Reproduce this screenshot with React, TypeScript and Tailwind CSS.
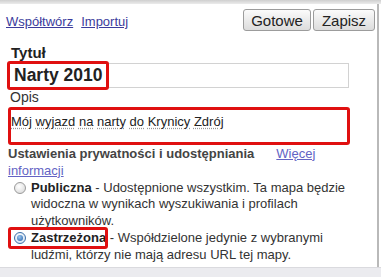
import React from "react";

const font = { fontFamily: '"Liberation Sans", Arial, sans-serif' };

function Radio({ checked }: { checked?: boolean }) {
  return (
    <span
      className={`mt-[2px] h-[12px] w-[12px] shrink-0 rounded-full border flex items-center justify-center ${
        checked
          ? "border-[#3d6fa8] bg-[radial-gradient(circle_at_40%_35%,#ffffff,#c9dcef)]"
          : "border-[#9a9a9a] bg-[radial-gradient(circle_at_40%_35%,#ffffff,#d4d4d4)]"
      }`}
    >
      {checked && <span className="h-[6px] w-[6px] rounded-full bg-[radial-gradient(circle_at_40%_35%,#9cc8f0,#1c5aa6)]" />}
    </span>
  );
}

export default function App() {
  return (
    <div className="w-[381px] h-[277px] bg-white text-[#333] overflow-hidden flex flex-col" style={font}>
      <div className="h-[4px] bg-gradient-to-b from-[#cfcfcf] to-[#ececec]" />
      <div className="flex flex-1">
        <div className="relative flex-1 flex flex-col">
          {/* top bar */}
          <div className="flex items-start justify-between pl-[6px] pr-[2px] pt-[5px]">
            <div className="flex gap-[8px] pt-[3px] text-[13px] text-[#3b3b9c]">
              <a className="underline">Współtwórz</a>
              <a className="underline">Importuj</a>
            </div>
            <div className="flex gap-[2px]">
              <button className="h-[22px] w-[68px] rounded-[3px] border border-[#9c9c9c] bg-gradient-to-b from-[#fbfbfb] to-[#dcdcdc] text-[15px] text-[#222]">
                Gotowe
              </button>
              <button className="h-[22px] w-[62px] rounded-[3px] border border-[#9c9c9c] bg-gradient-to-b from-[#fbfbfb] to-[#dcdcdc] text-[15px] text-[#222]">
                Zapisz
              </button>
            </div>
          </div>

          {/* title */}
          <div className="pl-[11px] pt-[12px] text-[15px] font-bold leading-[17px] text-[#222]">Tytuł</div>
          <div className="relative ml-[8px] mt-[2px] h-[25px] w-[341px] border border-[#d2d2d2] flex items-center pl-[5px]">
            <span className="text-[17.5px] font-bold text-[#222]">Narty 2010</span>
            <div className="absolute left-[-2px] top-[-3px] h-[29px] w-[102px] rounded-[3px] border-[3px] border-[#e01010]" />
          </div>

          {/* description */}
          <div className="pl-[10px] pt-[1px] text-[14px] leading-[16px] text-[#333]">Opis</div>
          <div className="relative ml-[8px] mt-[2px] h-[38px] w-[342px] pl-[3px] pt-[5px] text-[13px] text-[#222]">
            <span className="underline decoration-dotted decoration-[#999] underline-offset-2">Mój</span>{" "}
            <span className="underline decoration-dotted decoration-[#999] underline-offset-2">wyjazd</span>{" "}
            <span className="underline decoration-dotted decoration-[#999] underline-offset-2">na</span>{" "}
            <span className="underline decoration-dotted decoration-[#999] underline-offset-2">narty</span>{" "}
            <span className="underline decoration-dotted decoration-[#999] underline-offset-2">do</span>{" "}
            <span className="underline decoration-dotted decoration-[#999] underline-offset-2">Krynicy</span>{" "}
            <span className="underline decoration-dotted decoration-[#999] underline-offset-2">Zdrój</span>
            <div className="absolute inset-0 rounded-[3px] border-[3px] border-[#e01010]" />
          </div>

          {/* privacy */}
          <div className="pl-[8px] text-[13px] leading-[17px]">
            <span className="font-bold text-[#444]">Ustawienia prywatności i udostępniania</span>
            <a className="ml-[22px] text-[#6363c4] underline">Więcej</a>
            <br />
            <a className="text-[#6363c4] underline">informacji</a>
          </div>

          <div className="mt-[1px] flex gap-[5px] pl-[14px] text-[13px] leading-[16.5px]">
            <Radio />
            <p>
              <b className="text-[#222]">Publiczna</b> - Udostępnione wszystkim. Ta mapa będzie
              <br />
              widoczna w wynikach wyszukiwania i profilach
              <br />
              użytkowników.
            </p>
          </div>

          <div className="relative mt-[1px] flex gap-[5px] pl-[14px] text-[13px] leading-[16.5px]">
            <Radio checked />
            <p>
              <b className="text-[#222]">Zastrzeżona</b> - Współdzielone jedynie z wybranymi
              <br />
              ludźmi, którzy nie mają adresu URL tej mapy.
            </p>
            <div className="absolute left-[8px] top-[-3px] h-[22px] w-[100px] rounded-[3px] border-[3px] border-[#e01010]" />
          </div>
        </div>
        <div className="w-[2px] bg-[#b9b9b9]" />
        <div className="w-[2px] bg-white" />
      </div>
      <div className="h-[10px] border-t border-[#dadade] bg-[#ebebef]" />
    </div>
  );
}
